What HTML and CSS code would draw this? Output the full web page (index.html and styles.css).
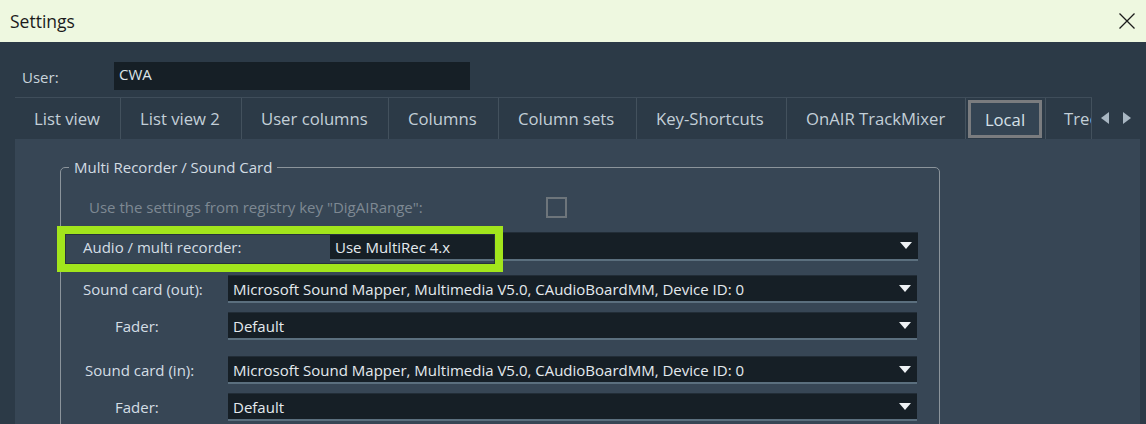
FILE: index.html
```html
<!DOCTYPE html>
<html>
<head>
<meta charset="utf-8">
<link rel="stylesheet" href="styles.css">
</head>
<body>
<div class="window">
  <div class="titlebar">
    <span class="title">Settings</span>
    <svg class="close" width="18" height="18" viewBox="0 0 18 18"><path d="M1.5 1.5 L16.5 16.5 M16.5 1.5 L1.5 16.5" stroke="#1c1c1c" stroke-width="1.3" fill="none"/></svg>
  </div>
  <div class="main">
    <div class="user-row">
      <span class="user-label">User:</span>
      <div class="user-input">CWA</div>
    </div>
    <div class="tabs-row">
      <div class="tabs">
        <div class="tab">List view</div>
        <div class="tab">List view 2</div>
        <div class="tab">User columns</div>
        <div class="tab">Columns</div>
        <div class="tab">Column sets</div>
        <div class="tab">Key-Shortcuts</div>
        <div class="tab">OnAIR TrackMixer</div>
        <div class="tab active"><span class="active-box">Local</span></div>
        <div class="tab">Tree</div>
      </div>
      <div class="arrows">
        <svg width="8" height="12" viewBox="0 0 8 12"><path d="M8 0 L0 6 L8 12 Z" fill="#a9b7c3"/></svg>
        <svg width="8" height="12" viewBox="0 0 8 12"><path d="M0 0 L8 6 L0 12 Z" fill="#a9b7c3"/></svg>
      </div>
    </div>
    <div class="panel">
      <div class="group">
        <span class="legend">Multi Recorder / Sound Card</span>
        <div class="row reg-row">
          <span class="reg-text">Use the settings from registry key "DigAIRange":</span>
          <span class="checkbox"></span>
        </div>
        <div class="row audio-row">
          <span class="label audio-label">Audio / multi recorder:</span>
          <div class="select audio-select">Use MultiRec 4.x<span class="arrow"></span></div>
          <div class="highlight"></div>
        </div>
        <div class="row out-row">
          <span class="label lbl-out">Sound card (out):</span>
          <div class="select">Microsoft Sound Mapper, Multimedia V5.0, CAudioBoardMM, Device ID: 0<span class="arrow"></span></div>
        </div>
        <div class="row fader-row">
          <span class="label lbl-fader">Fader:</span>
          <div class="select">Default<span class="arrow"></span></div>
        </div>
        <div class="row in-row">
          <span class="label lbl-in">Sound card (in):</span>
          <div class="select">Microsoft Sound Mapper, Multimedia V5.0, CAudioBoardMM, Device ID: 0<span class="arrow"></span></div>
        </div>
        <div class="row fader-row">
          <span class="label lbl-fader">Fader:</span>
          <div class="select">Default<span class="arrow"></span></div>
        </div>
      </div>
    </div>
  </div>
</div>
</body>
</html>
```
FILE: styles.css
```css
* { box-sizing: border-box; }
html, body { margin: 0; padding: 0; }
body {
  width: 1146px;
  height: 424px;
  overflow: hidden;
  font-family: "Open Sans", "Noto Sans", sans-serif;
  background: #2c3a47;
}
.window { width: 1146px; height: 424px; display: flex; flex-direction: column; overflow: hidden; }
.titlebar {
  flex: none;
  height: 42px;
  background: #eef8e0;
  display: flex;
  align-items: center;
  justify-content: space-between;
  padding: 0 10px 0 10px;
}
.title { font-size: 17.5px; color: #1b1b1b; }
.main {
  flex: 1;
  min-height: 0;
  background: #2c3a47;
  padding: 0 6px 0 15px;
  display: flex;
  flex-direction: column;
}
.user-row {
  flex: none;
  margin-top: 20px;
  height: 28px;
  display: flex;
  align-items: stretch;
}
.user-label {
  width: 99px;
  padding-left: 7px;
  padding-top: 5px;
  color: #c9d4dc;
  font-size: 15px;
}
.user-input {
  width: 356px;
  background: #161f26;
  color: #dde5ea;
  font-size: 15px;
  padding: 2px 0 0 5px;
}
.tabs-row {
  flex: none;
  margin-top: 7px;
  height: 42px;
  display: flex;
  align-items: stretch;
}
.tabs {
  width: 1077px;
  display: flex;
  overflow: hidden;
  border-top: 1px solid #3f4d5a;
}
.tab {
  flex: none;
  padding: 0 0 0 19px;
  display: flex;
  align-items: center;
  color: #c3cfd8;
  font-size: 16.7px;
  border-right: 1px solid #43515d;
  white-space: nowrap;
  overflow: hidden;
}
.tab:nth-child(1) { width: 106px; }
.tab:nth-child(2) { width: 121px; }
.tab:nth-child(3) { width: 147px; }
.tab:nth-child(4) { width: 110px; }
.tab:nth-child(5) { width: 138px; }
.tab:nth-child(6) { width: 150px; }
.tab:nth-child(7) { width: 179px; }
.tab:nth-child(8) { width: 80px; }
.tab:nth-child(9) { width: 46px; padding-left: 18px; }
.tab.active { padding: 2px 3px 1px 2px; }
.active-box {
  width: 100%;
  height: 100%;
  display: flex;
  align-items: center;
  justify-content: center;
  border: 3px solid #7a7c7f;
  background: #344453;
  color: #d6e0e8;
}
.arrows {
  display: flex;
  align-items: center;
  gap: 14px;
  padding-left: 9px;
}
.panel {
  flex: 1;
  min-height: 0;
  overflow: hidden;
  background: #374655;
  padding: 28px 0 0 45px;
}
.group {
  position: relative;
  width: 880px;
  height: 300px;
  border: 1px solid #8b949b;
  border-radius: 5px;
  padding: 26px 0 0 0;
}
.legend {
  position: absolute;
  left: 8px;
  top: -12px;
  padding: 0 5px;
  background: #374655;
  color: #d2dce3;
  font-size: 15px;
  line-height: 22px;
}
.row { display: flex; align-items: center; position: relative; }
.reg-row { height: 26px; }
.reg-text {
  width: 485px;
  padding-left: 28px;
  color: #7e8993;
  font-size: 15px;
}
.checkbox {
  width: 21px;
  height: 21px;
  border: 2px solid #6d757b;
}
.label { color: #d4dee5; font-size: 15px; }
.audio-row { margin-top: 12px; height: 29px; }
.audio-label { width: 269px; padding-left: 22px; }
.out-row { margin-top: 14px; height: 28px; }
.lbl-out { width: 167px; padding-left: 22px; }
.lbl-in { width: 167px; padding-left: 24px; }
.lbl-fader { width: 167px; padding-left: 54px; }
.fader-row { margin-top: 9px; height: 28px; }
.in-row { margin-top: 16px; height: 28px; }
.select {
  position: relative;
  width: 689px;
  height: 100%;
  background: #161f26;
  border-top: 1px solid #222d37;
  border-bottom: 2px solid #5b6f7e;
  color: #e4eaee;
  font-size: 15px;
  padding: 1px 0 0 5px;
  display: flex;
  align-items: center;
}
.audio-select { width: 588px; }
.arrow {
  position: absolute;
  right: 6px;
  top: 50%;
  margin-top: -4px;
  width: 0;
  height: 0;
  border-left: 6px solid transparent;
  border-right: 6px solid transparent;
  border-top: 7px solid #eef2f5;
}
.highlight {
  position: absolute;
  left: -4px;
  top: -6px;
  width: 446px;
  height: 46px;
  border: 8px solid #a2e51c;
  box-shadow: inset 0 0 0 1px #27323c;
  pointer-events: none;
}
```
